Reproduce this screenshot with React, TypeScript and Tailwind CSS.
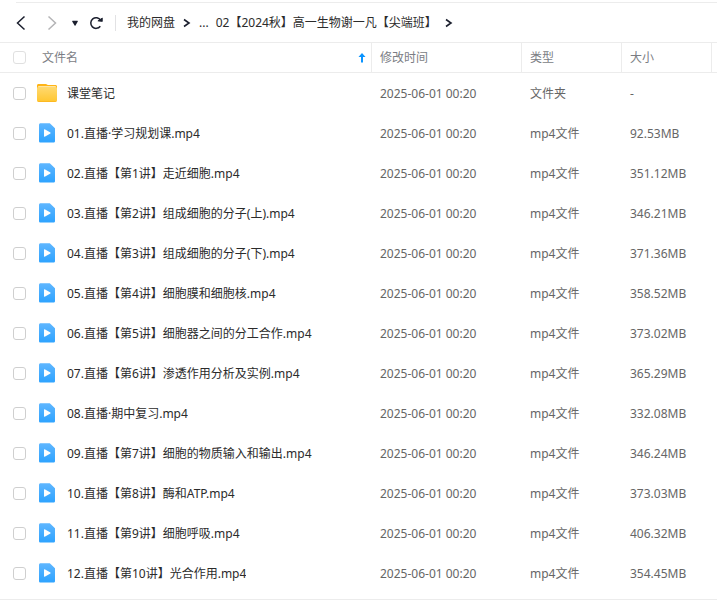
import { useState } from 'react';

type FileItem = {
  id: number;
  name: string;
  kind: 'folder' | 'video';
  modified: string;
  type: string;
  size: string;
};

const files: FileItem[] = [
  { id: 0, name: '课堂笔记', kind: 'folder', modified: '2025-06-01 00:20', type: '文件夹', size: '-' },
  { id: 1, name: '01.直播·学习规划课.mp4', kind: 'video', modified: '2025-06-01 00:20', type: 'mp4文件', size: '92.53MB' },
  { id: 2, name: '02.直播【第1讲】走近细胞.mp4', kind: 'video', modified: '2025-06-01 00:20', type: 'mp4文件', size: '351.12MB' },
  { id: 3, name: '03.直播【第2讲】组成细胞的分子(上).mp4', kind: 'video', modified: '2025-06-01 00:20', type: 'mp4文件', size: '346.21MB' },
  { id: 4, name: '04.直播【第3讲】组成细胞的分子(下).mp4', kind: 'video', modified: '2025-06-01 00:20', type: 'mp4文件', size: '371.36MB' },
  { id: 5, name: '05.直播【第4讲】细胞膜和细胞核.mp4', kind: 'video', modified: '2025-06-01 00:20', type: 'mp4文件', size: '358.52MB' },
  { id: 6, name: '06.直播【第5讲】细胞器之间的分工合作.mp4', kind: 'video', modified: '2025-06-01 00:20', type: 'mp4文件', size: '373.02MB' },
  { id: 7, name: '07.直播【第6讲】渗透作用分析及实例.mp4', kind: 'video', modified: '2025-06-01 00:20', type: 'mp4文件', size: '365.29MB' },
  { id: 8, name: '08.直播·期中复习.mp4', kind: 'video', modified: '2025-06-01 00:20', type: 'mp4文件', size: '332.08MB' },
  { id: 9, name: '09.直播【第7讲】细胞的物质输入和输出.mp4', kind: 'video', modified: '2025-06-01 00:20', type: 'mp4文件', size: '346.24MB' },
  { id: 10, name: '10.直播【第8讲】酶和ATP.mp4', kind: 'video', modified: '2025-06-01 00:20', type: 'mp4文件', size: '373.03MB' },
  { id: 11, name: '11.直播【第9讲】细胞呼吸.mp4', kind: 'video', modified: '2025-06-01 00:20', type: 'mp4文件', size: '406.32MB' },
  { id: 12, name: '12.直播【第10讲】光合作用.mp4', kind: 'video', modified: '2025-06-01 00:20', type: 'mp4文件', size: '354.45MB' },
];

function FolderIcon() {
  return (
    <svg width="20" height="20" viewBox="0 0 20 20" className="shrink-0" aria-hidden="true">
      <defs>
        <linearGradient id="folder-front" x1="0" y1="0" x2="0" y2="1">
          <stop offset="0" stopColor="#ffd970" />
          <stop offset="1" stopColor="#ffc62f" />
        </linearGradient>
      </defs>
      <path d="M0 2.500C0 1.500.7 1 1.500 1h7.200c.6 0 1 .2 1.400.6l.6.4h7.800c.9 0 1.500.6 1.500 1.500V8H0z" fill="#ffb416" />
      <path d="M1.200 3.200h17.600v3H1.200z" fill="#fff0c4" />
      <path d="M0 5.500c0-.9.6-1.500 1.500-1.500h17c.9 0 1.500.6 1.500 1.500v11.800c0 1-.8 1.700-1.800 1.700H1.800C.8 19 0 18.300 0 17.300z" fill="url(#folder-front)" />
      <path d="M.4 18.200c.3.500.8.800 1.400.800h16.400c.6 0 1.100-.3 1.400-.8z" fill="#fdb51c" />
    </svg>
  );
}

function VideoIcon() {
  return (
    <svg width="20" height="20" viewBox="0 0 20 20" className="shrink-0" aria-hidden="true">
      <defs>
        <linearGradient id="video-sheet" x1="0" y1="0" x2="0" y2="1">
          <stop offset="0" stopColor="#5eb6ff" />
          <stop offset="1" stopColor="#2ea3ff" />
        </linearGradient>
      </defs>
      <path d="M2 1.900C2 1 2.700.3 3.600.3h9.200L18 5.200v12.700c0 .9-.7 1.600-1.600 1.600H3.600c-.9 0-1.600-.7-1.600-1.600z" fill="url(#video-sheet)" />
      <path d="M7 6.700v6.600c0 .4.400.6.700.4l5.700-3.300c.3-.2.300-.6 0-.8L7.700 6.300c-.3-.2-.7 0-.7.4z" fill="#fff" />
    </svg>
  );
}

function Chevron() {
  return (
    <svg width="8" height="10" viewBox="0 0 8 10" fill="none" stroke="#1b1f2e" strokeWidth="1.600" aria-hidden="true">
      <path d="M1 1.500 6 5 1 8.500" />
    </svg>
  );
}

type CheckProps = {
  label: string;
  checked: boolean;
  onChange: () => void;
  light?: boolean;
};

function Check({ label, checked, onChange, light }: CheckProps) {
  return (
    <input
      type="checkbox"
      aria-label={label}
      checked={checked}
      onChange={onChange}
      className={`size-[13px] shrink-0 appearance-none rounded-[3px] border bg-white checked:border-[#06a7ff] checked:bg-[#06a7ff] ${light ? 'border-[#e0e0e0]' : 'border-[#cfcfcf]'}`}
    />
  );
}

export default function App() {
  const [selected, setSelected] = useState<number[]>([]);

  const allSelected = selected.length === files.length;

  function toggle(id: number): void {
    setSelected((prev) => (prev.includes(id) ? prev.filter((x) => x !== id) : [...prev, id]));
  }

  return (
    <div className="bg-white pt-[2px] font-['Noto_Sans','Noto_Sans_CJK_SC',sans-serif] text-xs text-[#2b2b2b]">
      <div className="ml-4 border-t border-[#ececec]" />

      <nav className="flex h-10 items-center border-b border-[#ececec] pl-[11px]">
        <button type="button" aria-label="后退" className="flex size-5 items-center justify-center">
          <svg width="12" height="16" viewBox="0 0 12 16" fill="none" stroke="#1b1f2e" strokeWidth="1.500">
            <path d="M9.500 1.500 2.500 8l7 6.500" />
          </svg>
        </button>
        <button type="button" aria-label="前进" className="ml-[11px] flex size-5 items-center justify-center">
          <svg width="12" height="16" viewBox="0 0 12 16" fill="none" stroke="#b4b4b6" strokeWidth="1.500">
            <path d="m2.500 1.500 7 6.500-7 6.500" />
          </svg>
        </button>
        <button type="button" aria-label="历史记录" className="ml-[9px] flex h-5 w-2 items-center justify-center">
          <svg width="8" height="6" viewBox="0 0 8 6" fill="#1b1f2e">
            <path d="M1.600.8h4.800c.4 0 .6.4.4.7L4.500 5.400c-.2.300-.7.300-.9 0L1.200 1.500C1 1.200 1.200.800 1.600.800z" />
          </svg>
        </button>
        <button type="button" aria-label="刷新" className="ml-[7px] flex size-5 items-center justify-center">
          <svg width="14" height="14" viewBox="0 0 14 14" fill="none">
            <path d="M11.300 10.300A5.300 5.300 0 1 1 11.600 4.300" stroke="#1b1f2e" strokeWidth="1.500" />
            <path d="M8.900 4.900 13.300 2v3.400z" fill="#1b1f2e" stroke="#1b1f2e" strokeWidth=".8" />
          </svg>
        </button>
        <span className="ml-[9px] h-4 w-px bg-[#e2e2e4]" />
        <div className="ml-[11px] flex items-center whitespace-nowrap">
          <a href="#root">我的网盘</a>
          <span className="ml-2"><Chevron /></span>
          <a href="#more" className="ml-2">...</a>
          <a href="#current" className="ml-[7px]">02【2024秋】高一生物谢一凡【尖端班】</a>
          <span className="ml-2"><Chevron /></span>
        </div>
      </nav>

      <table className="w-full table-fixed border-separate border-spacing-0 text-left">
        <colgroup>
          <col />
          <col className="w-[150px]" />
          <col className="w-[100px]" />
          <col className="w-[90px]" />
          <col className="w-[5px]" />
        </colgroup>
        <thead className="text-[#7b7d84]">
          <tr className="h-[30px]">
            <th className="border-r border-b border-[#ececec] p-0 font-normal">
              <div className="flex items-center pr-[5px] pl-[13px]">
                <Check
                  label="全选"
                  light
                  checked={allSelected}
                  onChange={() => setSelected(allSelected ? [] : files.map((f) => f.id))}
                />
                <button type="button" className="ml-4 flex flex-1 items-center justify-between">
                  文件名
                  <svg width="8" height="10" viewBox="0 0 8 10" fill="#0a94ff" aria-hidden="true">
                    <path d="M4 0 7.500 4H5v5.500H3V4H.5z" />
                  </svg>
                </button>
              </div>
            </th>
            <th className="border-r border-b border-[#ececec] p-0 pl-2 font-normal">修改时间</th>
            <th className="border-r border-b border-[#ececec] p-0 pl-2 font-normal">类型</th>
            <th className="border-r border-b border-[#ececec] p-0 pl-2 font-normal">大小</th>
            <td className="border-b border-[#ececec] p-0" />
          </tr>
        </thead>
        <tbody className="text-[#666]">
          {files.map((file) => (
            <tr key={file.id} className="h-10 hover:bg-[#f7f9fc]">
              <td className="p-0">
                <div className="flex items-center pl-[13px] text-[#2b2b2b]">
                  <Check
                    label={file.name}
                    checked={selected.includes(file.id)}
                    onChange={() => toggle(file.id)}
                  />
                  <span className="ml-[11px]">
                    {file.kind === 'folder' ? <FolderIcon /> : <VideoIcon />}
                  </span>
                  <span className="ml-[10px] truncate pt-[2px]">{file.name}</span>
                </div>
              </td>
              <td className="p-0 pt-[2px] pl-2">{file.modified}</td>
              <td className="p-0 pt-[2px] pl-2">{file.type}</td>
              <td className="p-0 pt-[2px] pl-2">{file.size}</td>
              <td className="p-0" />
            </tr>
          ))}
        </tbody>
      </table>

      <div className="mt-[6px] border-t border-[#ececec]" />
    </div>
  );
}
